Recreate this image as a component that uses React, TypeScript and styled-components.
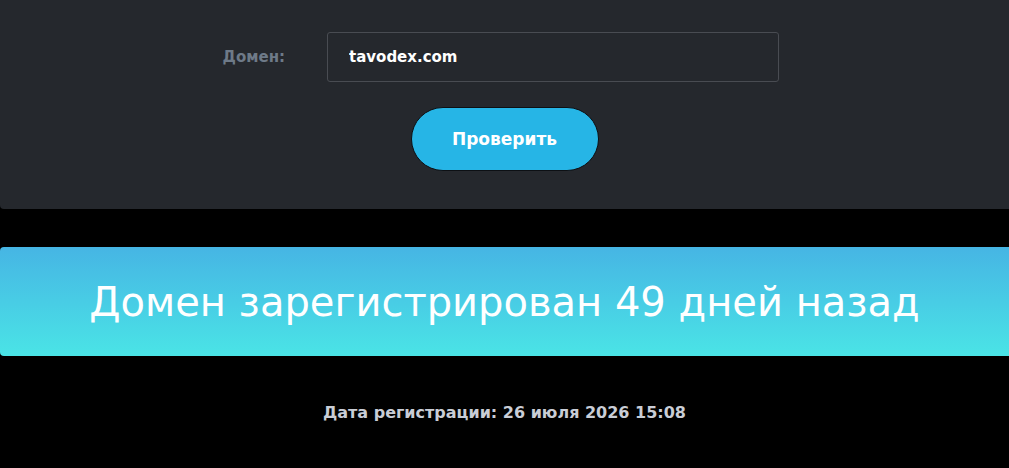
import styled, { createGlobalStyle } from "styled-components";

const GlobalStyle = createGlobalStyle`
  body {
    margin: 0;
    background: #000;
    font-family: "DejaVu Sans", "Noto Sans", sans-serif;
  }
`;

function App() {
  return (
    <>
      <GlobalStyle />
      <Page>
        <FormPanel>
          <FieldRow>
            <Label htmlFor="domain">Домен:</Label>
            <Input id="domain" defaultValue="tavodex.com" autoComplete="off" />
          </FieldRow>
          <CheckButton type="button">Проверить</CheckButton>
        </FormPanel>
        <ResultBanner>Домен зарегистрирован 49 дней назад</ResultBanner>
        <RegDate>Дата регистрации: 26 июля 2026 15:08</RegDate>
      </Page>
    </>
  );
}

export default App;

const Page = styled.div`
  display: flex;
  flex-direction: column;
`;

const FormPanel = styled.div`
  display: flex;
  flex-direction: column;
  align-items: center;
  padding: 32px 0 38px;
  background: #25282d;
  border-radius: 0 0 0 4px;
`;

const FieldRow = styled.div`
  display: flex;
  align-items: center;
  gap: 42px;
  padding-right: 8px;
`;

const Label = styled.label`
  width: 63px;
  text-align: right;
  white-space: nowrap;
  color: #6e7a88;
  font-size: 15px;
  font-weight: 600;
`;

const Input = styled.input`
  width: 452px;
  height: 50px;
  padding: 0 21px;
  box-sizing: border-box;
  background: #25282d;
  border: 1px solid #494c52;
  border-radius: 3px;
  color: #fff;
  font-family: inherit;
  font-size: 15px;
  font-weight: 600;
  outline: none;
`;

const CheckButton = styled.button`
  margin-top: 25px;
  width: 188px;
  height: 64px;
  background: #26b5e6;
  border: 1px solid #0d1014;
  border-radius: 32px;
  color: #fff;
  font-family: inherit;
  font-size: 17px;
  font-weight: 700;
  cursor: pointer;
`;

const ResultBanner = styled.div`
  margin-top: 38px;
  height: 109px;
  display: flex;
  align-items: center;
  justify-content: center;
  background: linear-gradient(180deg, #46b5e4 0%, #4ae4e6 100%);
  border-radius: 4px 0 0 4px;
  color: #fff;
  font-size: 40px;
  font-weight: 400;
`;

const RegDate = styled.div`
  margin-top: 47px;
  text-align: center;
  color: #c9cdd6;
  font-size: 16px;
  font-weight: 700;
`;
